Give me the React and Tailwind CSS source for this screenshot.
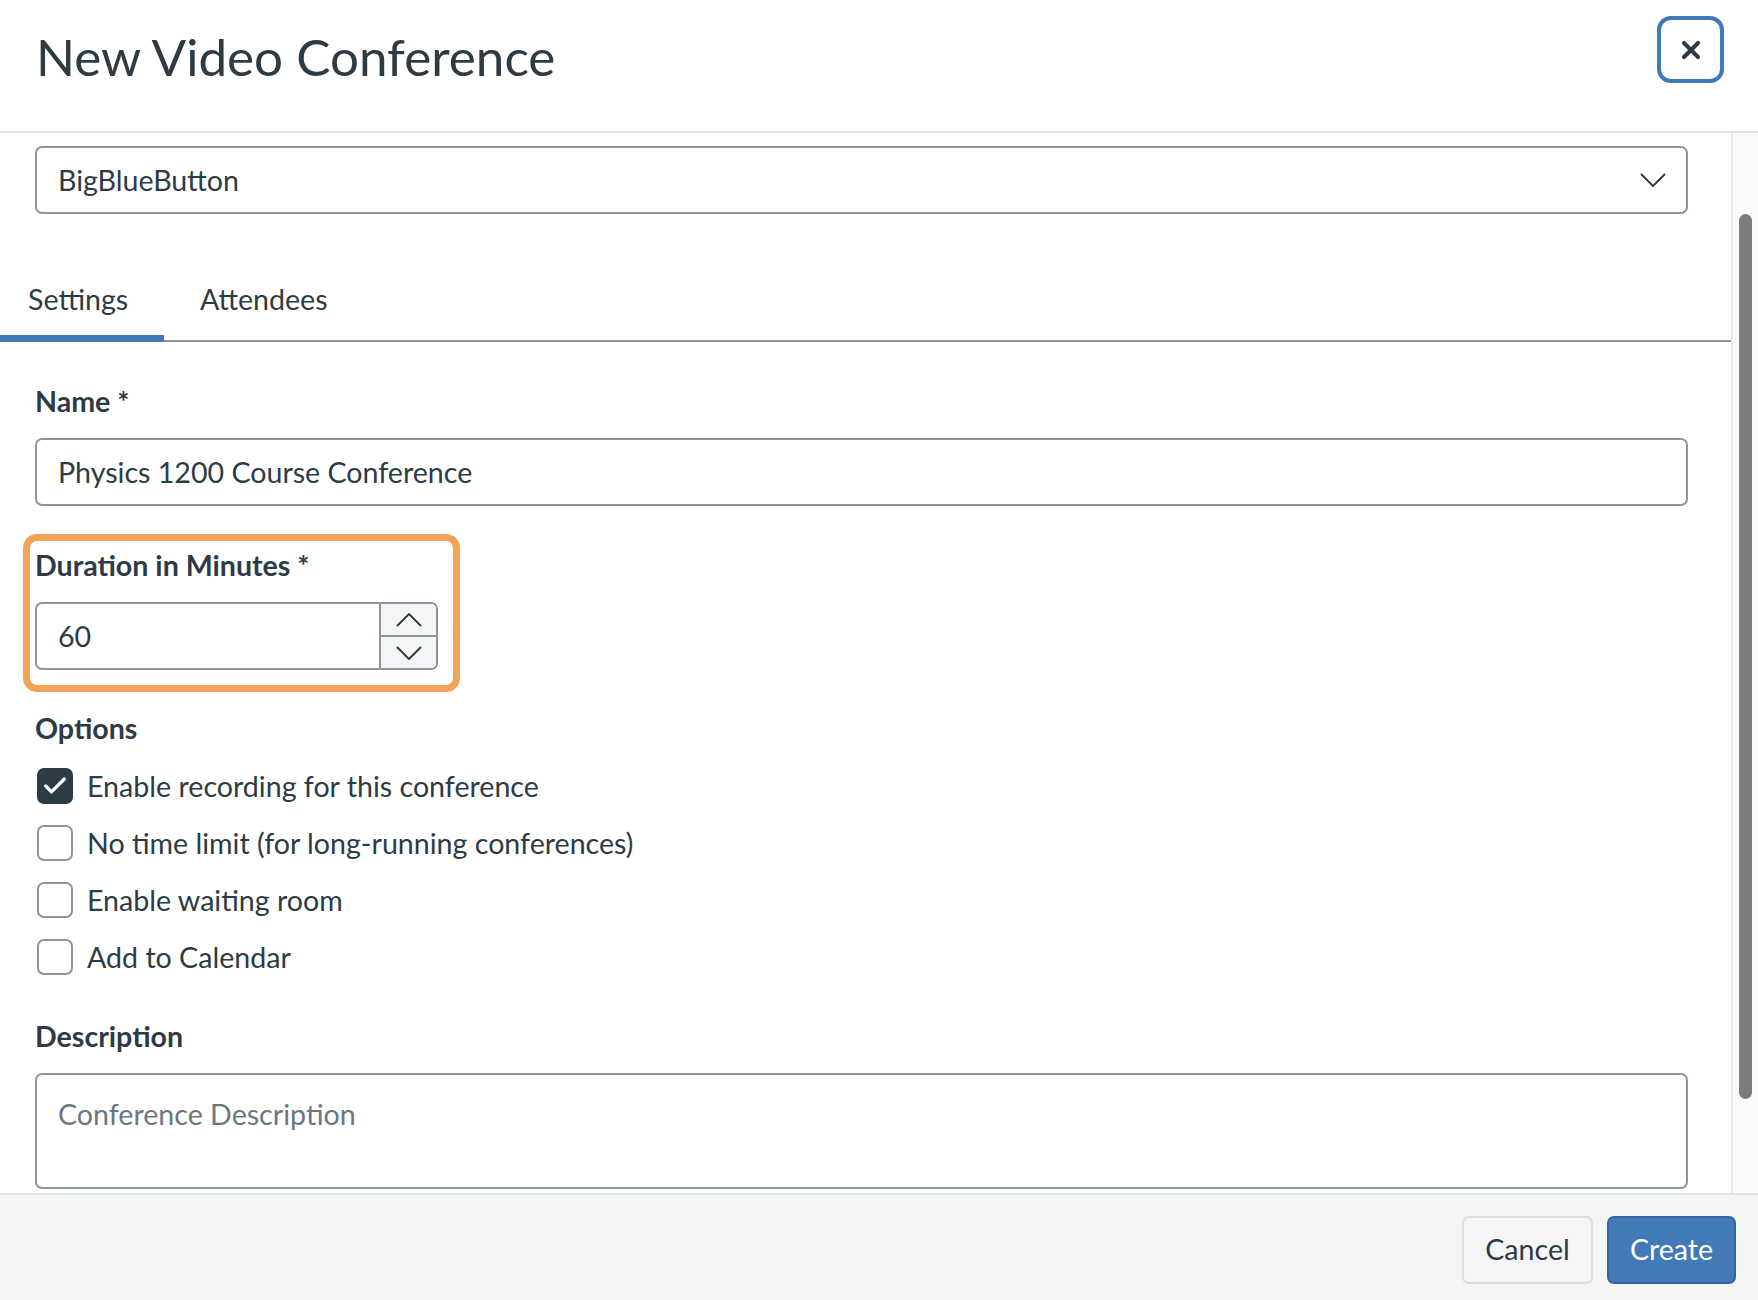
import { Check, X } from "lucide-react";

// Option rows under the "Options" label
const options = [
  { label: "Enable recording for this conference", checked: true },
  { label: "No time limit (for long-running conferences)", checked: false },
  { label: "Enable waiting room", checked: false },
  { label: "Add to Calendar", checked: false },
];

const fieldClass =
  "block w-full h-[68px] border-2 border-[#8d95a0] rounded-[7px] bg-white pl-[21px] pr-4 text-[28.6px] text-[#2d3b45] outline-none";

// Thin wide chevron, the icon packages only have narrower ones
const Chevron = ({ up }) => (
  <svg width="26" height="14" viewBox="0 0 26 14" fill="none" className={up ? "rotate-180" : ""}>
    <path d="M1 1 L13 13 L25 1" stroke="#2d3b45" strokeWidth="1.9" />
  </svg>
);

const OptionRow = ({ label, checked }) => (
  <div className="flex items-center h-[36px] gap-[14px]">
    {checked ? (
      <div className="w-[36px] h-[36px] ml-[2px] rounded-[7px] bg-[#2d3b45] flex items-center justify-center">
        <Check className="w-[28px] h-[28px] text-white" strokeWidth={2.8} />
      </div>
    ) : (
      <div className="w-[36px] h-[36px] ml-[2px] rounded-[7px] border-2 border-[#8d95a0] bg-white" />
    )}
    <span className="text-[28.6px] leading-none">{label}</span>
  </div>
);

export default function App() {
  return (
    <div className="w-full h-[1300px] flex flex-col bg-white text-[#2d3b45] font-['Lato',sans-serif] overflow-hidden">
      {/* Header */}
      <div className="h-[133px] shrink-0 flex items-start justify-between border-b-2 border-[#e0e3e8] pl-[36px] pr-[34px]">
        <h2 className="text-[51.2px] leading-none mt-[31px]">New Video Conference</h2>
        <button className="w-[67px] h-[67px] mt-[16px] border-4 border-[#4179b8] rounded-[14px] flex items-center justify-center">
          <X className="w-[28px] h-[28px] text-[#2d3b45]" strokeWidth={3.5} />
        </button>
      </div>

      {/* Scrolling body */}
      <div className="flex-1 min-h-0 flex">
        <div className="flex-1 min-w-0">
          <div className="pl-[35px] pt-[13px] pr-[43px]">
            <div className="h-[68px] border-2 border-[#8d95a0] rounded-[7px] flex items-center justify-between pl-[21px] pr-[20px]">
              <span className="text-[28.6px]">BigBlueButton</span>
              <Chevron />
            </div>
          </div>

          {/* Tabs */}
          <div className="h-[88px] mt-[40px] flex items-end border-b-2 border-[#8d95a0]">
            <div className="w-[164px] h-[64px] -mb-[2px] border-b-[7px] border-[#4179b8] pl-[28px] text-[28.6px]">
              Settings
            </div>
            <div className="pl-[36px] h-[64px] -mb-[2px] text-[28.6px]">Attendees</div>
          </div>

          <div className="pl-[35px] pr-[43px]">
            <label className="block mt-[42px] text-[28.6px] leading-[34px] font-bold">Name *</label>
            <input
              readOnly
              value="Physics 1200 Course Conference"
              className={`${fieldClass} mt-[20px]`}
            />

            {/* Duration with orange highlight */}
            <div className="relative mt-[42px] w-[403px]">
              <div className="absolute -left-[12px] -right-[22px] -top-[14px] -bottom-[22px] border-[7px] border-[#f2a355] rounded-[14px] pointer-events-none" />
              <label className="block text-[28.6px] leading-[34px] font-bold">Duration in Minutes *</label>
              <div className="mt-[20px] h-[68px] flex border-2 border-[#8d95a0] rounded-[7px] overflow-hidden">
                <input
                  readOnly
                  value="60"
                  className="flex-1 min-w-0 pl-[21px] pt-[1px] text-[28.6px] outline-none"
                />
                <div className="w-[57px] shrink-0 flex flex-col border-l-2 border-[#8d95a0] bg-[#f4f5f5]">
                  <div className="flex-1 flex items-center justify-center border-b-2 border-[#8d95a0]">
                    <Chevron up />
                  </div>
                  <div className="flex-1 flex items-center justify-center">
                    <Chevron />
                  </div>
                </div>
              </div>
            </div>

            <div className="mt-[41px] text-[28.6px] leading-[34px] font-bold">Options</div>
            <div className="mt-[23px] flex flex-col gap-[21px]">
              {options.map((o) => (
                <OptionRow key={o.label} label={o.label} checked={o.checked} />
              ))}
            </div>

            <label className="block mt-[44px] text-[28.6px] leading-[34px] font-bold">Description</label>
            <textarea
              readOnly
              placeholder="Conference Description"
              className="block w-full h-[116px] mt-[20px] border-2 border-[#8d95a0] rounded-[7px] pl-[21px] pt-[22px] text-[28.6px] leading-[34px] resize-none outline-none placeholder:text-[#6b7780]"
            />
          </div>
        </div>

        {/* Scrollbar */}
        <div className="w-[27px] shrink-0 border-l-2 border-[#e8e8e8] bg-[#fafafa] pt-[81px] pl-[6px]">
          <div className="w-[13px] h-[885px] rounded-full bg-[#7c7c7c]" />
        </div>
      </div>

      {/* Footer */}
      <div className="h-[107px] shrink-0 border-t-2 border-[#e0e3e8] bg-[#f3f4f4] flex items-center justify-end gap-[14px] pr-[22px] pt-[4px]">
        <button className="w-[131px] h-[68px] rounded-[7px] border-2 border-[#dadee0] bg-[#f5f5f5] text-[28.6px]">
          Cancel
        </button>
        <button className="w-[129px] h-[68px] rounded-[7px] border-2 border-[#376596] bg-[#4279b7] text-white text-[28.6px]">
          Create
        </button>
      </div>
    </div>
  );
}
